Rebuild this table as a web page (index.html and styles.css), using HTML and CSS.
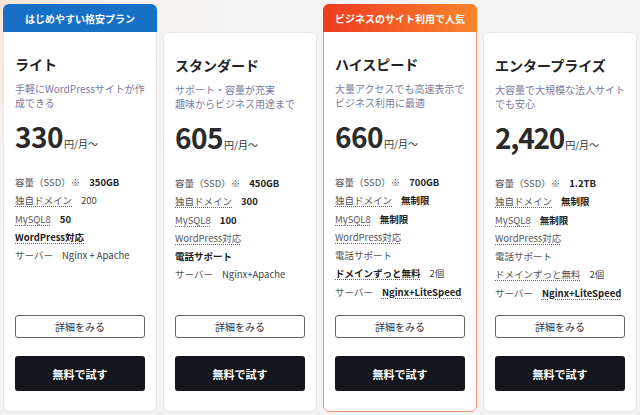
FILE: index.html
```html
<!DOCTYPE html>
<html lang="ja">
<head>
<meta charset="utf-8">
<title>プラン比較</title>
<link rel="stylesheet" href="styles.css">
</head>
<body>
<div class="plans">
  <div class="card featured blue">
    <div class="badge">はじめやすい格安プラン</div>
    <div class="body">
      <h2 class="name">ライト</h2>
      <p class="desc">手軽にWordPressサイトが作成できる</p>
      <p class="price"><span class="num">330</span><span class="unit">円/月〜</span></p>
      <ul class="feats">
        <li><span class="lbl">容量（SSD）※</span><b>350GB</b></li>
        <li><span class="lbl dot">独自ドメイン</span><span class="val">200</span></li>
        <li><span class="lbl dot">MySQL8</span><b>50</b></li>
        <li><b class="dot">WordPress対応</b></li>
        <li><span class="lbl">サーバー</span><span class="val">Nginx + Apache</span></li>
      </ul>
      <div class="btns">
        <a class="btn-outline">詳細をみる</a>
        <a class="btn-dark">無料で試す</a>
      </div>
    </div>
  </div>
  <div class="card">
    <div class="body">
      <h2 class="name">スタンダード</h2>
      <p class="desc">サポート・容量が充実<br>趣味からビジネス用途まで</p>
      <p class="price"><span class="num">605</span><span class="unit">円/月〜</span></p>
      <ul class="feats">
        <li><span class="lbl">容量（SSD）※</span><b>450GB</b></li>
        <li><span class="lbl dot">独自ドメイン</span><b>300</b></li>
        <li><span class="lbl dot">MySQL8</span><b>100</b></li>
        <li><span class="lbl dot">WordPress対応</span></li>
        <li><b>電話サポート</b></li>
        <li><span class="lbl">サーバー</span><span class="val">Nginx+Apache</span></li>
      </ul>
      <div class="btns">
        <a class="btn-outline">詳細をみる</a>
        <a class="btn-dark">無料で試す</a>
      </div>
    </div>
  </div>
  <div class="card featured orange">
    <div class="badge">ビジネスのサイト利用で人気</div>
    <div class="body">
      <h2 class="name">ハイスピード</h2>
      <p class="desc">大量アクセスでも高速表示で<br>ビジネス利用に最適</p>
      <p class="price"><span class="num">660</span><span class="unit">円/月〜</span></p>
      <ul class="feats">
        <li><span class="lbl">容量（SSD）※</span><b>700GB</b></li>
        <li><span class="lbl dot">独自ドメイン</span><b>無制限</b></li>
        <li><span class="lbl dot">MySQL8</span><b>無制限</b></li>
        <li><span class="lbl dot">WordPress対応</span></li>
        <li><span class="lbl">電話サポート</span></li>
        <li><b class="dot">ドメインずっと無料</b><span class="val">2個</span></li>
        <li><span class="lbl">サーバー</span><b class="dot">Nginx+LiteSpeed</b></li>
      </ul>
      <div class="btns">
        <a class="btn-outline">詳細をみる</a>
        <a class="btn-dark">無料で試す</a>
      </div>
    </div>
  </div>
  <div class="card">
    <div class="body">
      <h2 class="name">エンタープライズ</h2>
      <p class="desc">大容量で大規模な法人サイトでも安心</p>
      <p class="price"><span class="num tight">2,420</span><span class="unit">円/月〜</span></p>
      <ul class="feats">
        <li><span class="lbl">容量（SSD）※</span><b>1.2TB</b></li>
        <li><span class="lbl dot">独自ドメイン</span><b>無制限</b></li>
        <li><span class="lbl dot">MySQL8</span><b>無制限</b></li>
        <li><span class="lbl dot">WordPress対応</span></li>
        <li><span class="lbl">電話サポート</span></li>
        <li><span class="lbl dot">ドメインずっと無料</span><span class="val">2個</span></li>
        <li><span class="lbl">サーバー</span><b class="dot">Nginx+LiteSpeed</b></li>
      </ul>
      <div class="btns">
        <a class="btn-outline">詳細をみる</a>
        <a class="btn-dark">無料で試す</a>
      </div>
    </div>
  </div>
</div>
</body>
</html>
```

FILE: styles.css
```css
* { box-sizing: border-box; }
html, body { margin: 0; padding: 0; }
body {
  width: 640px;
  height: 415px;
  overflow: hidden;
  font-family: "Noto Sans CJK JP", "Noto Sans", sans-serif;
  color: #222;
  background: radial-gradient(circle at 0 0, #f8e4d6 0, #f5eeea 110px, #f3f3f3 240px);
}
.plans {
  display: flex;
  gap: 6px;
  padding: 4px 3px 3px;
  height: 415px;
  align-items: stretch;
}
.card {
  width: 154px;
  display: flex;
  flex-direction: column;
  background: #fff;
  border: 1px solid #e6e6e6;
  border-radius: 6px;
  margin-top: 28px;
}
.card.featured {
  margin-top: 0;
}
.card.orange {
  border-color: #f2937a;
}
.badge {
  height: 28px;
  margin: -1px -1px 0;
  border-radius: 6px 6px 0 0;
  color: #fff;
  font-weight: 700;
  font-size: 10px;
  display: flex;
  align-items: center;
  justify-content: center;
}
.blue .badge { background: #1770c5; }
.orange .badge { background: linear-gradient(90deg, #ee3b21, #f8842d); }
.body {
  flex: 1;
  display: flex;
  flex-direction: column;
  padding: 22px 11px 20px;
}
.name {
  margin: 0;
  font-size: 14px;
  line-height: 20px;
  font-weight: 700;
  color: #222;
}
.desc {
  margin: 8px 0 0;
  font-size: 10px;
  line-height: 14px;
  color: #7b7a9e;
  height: 28px;
}
.price {
  margin: 9px 0 0;
  line-height: 34px;
  white-space: nowrap;
}
.num {
  font-size: 28px;
  font-weight: 700;
  color: #2a2a2a;
  letter-spacing: -0.5px;
}
.num.tight {
  letter-spacing: -1.2px;
}
.unit {
  font-size: 10px;
  color: #333;
  margin-left: 1px;
}
.feats {
  list-style: none;
  margin: 12px 0 0;
  padding: 0;
  font-size: 9.5px;
  line-height: 18.3px;
  color: #555;
}
.feats li {
  display: flex;
  gap: 9px;
  white-space: nowrap;
}
.feats b { color: #222; font-weight: 700; }
.val { color: #444; }
.dot {
  text-decoration: underline dotted #666;
  text-underline-offset: 2px;
}
.btns {
  margin-top: auto;
  display: flex;
  flex-direction: column;
  gap: 18px;
}
.btn-outline {
  height: 23px;
  border: 1px solid #666;
  border-radius: 3px;
  display: flex;
  align-items: center;
  justify-content: center;
  font-size: 10px;
  color: #333;
}
.btn-dark {
  height: 35px;
  background: #16161d;
  border-radius: 3px;
  display: flex;
  align-items: center;
  justify-content: center;
  font-size: 11px;
  font-weight: 700;
  color: #fff;
}
```
